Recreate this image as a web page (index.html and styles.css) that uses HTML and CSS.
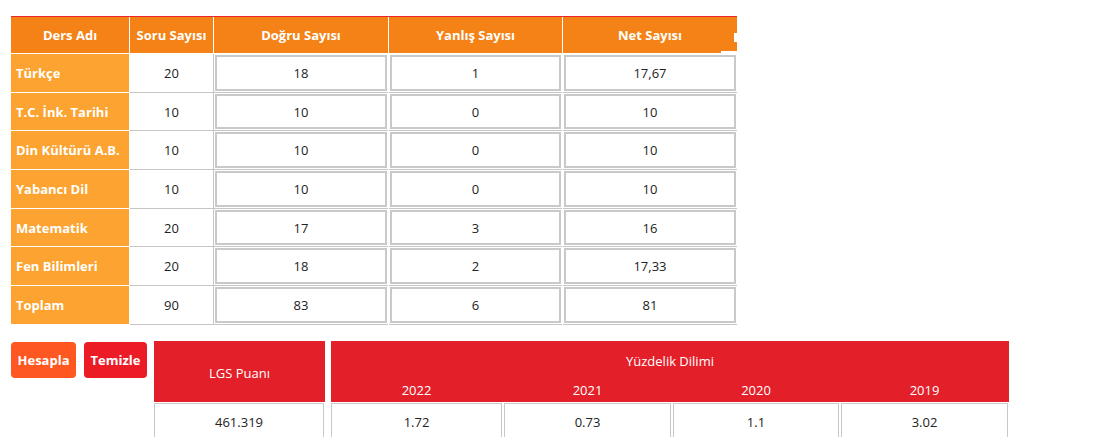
FILE: index.html
```html
<!DOCTYPE html>
<html lang="tr">
<head>
<meta charset="utf-8">
<title>LGS Puan Hesaplama</title>
<link rel="stylesheet" href="styles.css">
</head>
<body>
<div class="page">
  <div class="calc">
    <div class="grid">
      <div class="hd">Ders Adı</div>
      <div class="hd">Soru Sayısı</div>
      <div class="hd">Doğru Sayısı</div>
      <div class="hd">Yanlış Sayısı</div>
      <div class="hd hd-last">Net Sayısı</div>

      <div class="name">Türkçe</div><div class="cnt">20</div>
      <div class="inp"><div class="box">18</div></div><div class="inp"><div class="box">1</div></div><div class="inp"><div class="box">17,67</div></div>

      <div class="name">T.C. İnk. Tarihi</div><div class="cnt">10</div>
      <div class="inp"><div class="box">10</div></div><div class="inp"><div class="box">0</div></div><div class="inp"><div class="box">10</div></div>

      <div class="name">Din Kültürü A.B.</div><div class="cnt">10</div>
      <div class="inp"><div class="box">10</div></div><div class="inp"><div class="box">0</div></div><div class="inp"><div class="box">10</div></div>

      <div class="name">Yabancı Dil</div><div class="cnt">10</div>
      <div class="inp"><div class="box">10</div></div><div class="inp"><div class="box">0</div></div><div class="inp"><div class="box">10</div></div>

      <div class="name">Matematik</div><div class="cnt">20</div>
      <div class="inp"><div class="box">17</div></div><div class="inp"><div class="box">3</div></div><div class="inp"><div class="box">16</div></div>

      <div class="name">Fen Bilimleri</div><div class="cnt">20</div>
      <div class="inp"><div class="box">18</div></div><div class="inp"><div class="box">2</div></div><div class="inp"><div class="box">17,33</div></div>

      <div class="name">Toplam</div><div class="cnt">90</div>
      <div class="inp"><div class="box">83</div></div><div class="inp"><div class="box">6</div></div><div class="inp"><div class="box">81</div></div>
    </div>
  </div>

  <div class="result">
    <div class="buttons">
      <button class="btn btn-calc">Hesapla</button>
      <button class="btn btn-clear">Temizle</button>
    </div>
    <div class="score">
      <div class="rh">LGS Puanı</div>
      <div class="val">461.319</div>
    </div>
    <div class="pct">
      <div class="rh pct-head">
        <div class="pct-title">Yüzdelik Dilimi</div>
        <div class="years"><span>2022</span><span>2021</span><span>2020</span><span>2019</span></div>
      </div>
      <div class="vals">
        <div class="val">1.72</div>
        <div class="val">0.73</div>
        <div class="val">1.1</div>
        <div class="val">3.02</div>
      </div>
    </div>
  </div>
</div>
</body>
</html>
```
FILE: styles.css
```css
* { box-sizing: border-box; }
body {
  margin: 8px;
  background: #fff;
  font-family: "Open Sans", "Noto Sans", sans-serif;
  font-size: 13px;
  color: #222;
}
.page { padding: 8px 0 0 3px; }

.calc {
  width: 726px;
  border-top: 1px solid #e8262b;
}
.grid {
  display: grid;
  grid-template-columns: 118px 83px 174px 173px 174px;
  grid-template-rows: 36px repeat(7, 37.7px);
  column-gap: 1px;
  row-gap: 1px;
  background: #fff;
}
.hd {
  background: #f48216;
  color: #fff;
  font-weight: 700;
  display: flex;
  align-items: center;
  justify-content: center;
  white-space: nowrap;
  position: relative;
}
.hd-last::before {
  content: "";
  position: absolute;
  right: 0;
  top: 16px;
  width: 3px;
  height: 9px;
  background: #fff;
}
.hd-last::after {
  content: "";
  position: absolute;
  right: 0;
  bottom: -1px;
  width: 16px;
  height: 3px;
  background: #fff;
}
.name {
  background: #fca331;
  color: #fff;
  font-weight: 700;
  display: flex;
  align-items: center;
  padding-left: 5px;
  white-space: nowrap;
}
.cnt {
  background: #fff;
  display: flex;
  align-items: center;
  justify-content: center;
  box-shadow: 0 1px 0 #c6c6c6, 1px 0 0 #c6c6c6, 1px 1px 0 #c6c6c6;
}
.inp {
  padding: 1px;
  box-shadow: 0 1px 0 #c6c6c6;
}
.box {
  height: 100%;
  border: 2px solid #c9c9c9;
  display: flex;
  align-items: center;
  justify-content: center;
}

.result {
  display: flex;
  align-items: flex-start;
  margin-top: 17px;
}
.buttons {
  display: flex;
  gap: 8px;
  margin-top: 1px;
  width: 143px;
}
.btn {
  font-family: inherit;
  font-size: 13px;
  font-weight: 700;
  color: #fff;
  border: none;
  border-radius: 4px;
  height: 36px;
  padding: 0 5px;
}
.btn-calc { background: #fe5722; width: 65px; }
.btn-clear { background: #ec1c27; width: 63px; }

.rh {
  background: #e31f29;
  color: #fff;
  height: 61px;
}
.score { width: 171px; }
.score .rh {
  display: flex;
  align-items: center;
  justify-content: center;
  padding-top: 3px;
}
.val {
  height: 40px;
  border: 1px solid #c8c8c8;
  border-bottom: none;
  margin-top: 1px;
  display: flex;
  justify-content: center;
  padding-top: 9px;
}
.score .val { width: 170px; }
.pct { margin-left: 6px; width: 678px; }
.pct-title {
  text-align: center;
  padding-top: 11px;
  height: 40px;
}
.years {
  display: grid;
  grid-template-columns: 171px 167px 166px 167px;
  column-gap: 2px;
}
.years span { text-align: center; }
.vals {
  display: grid;
  grid-template-columns: 171px 167px 166px 167px;
  column-gap: 2px;
}
```
